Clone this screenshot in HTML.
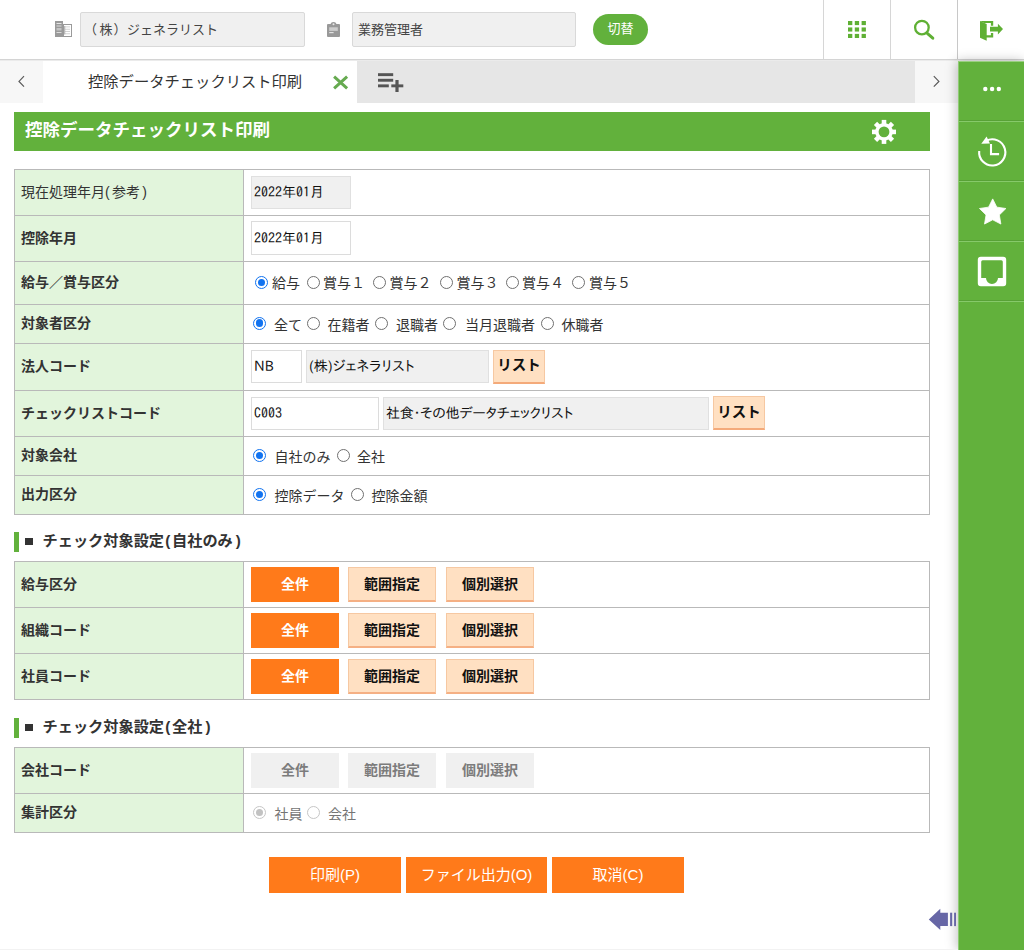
<!DOCTYPE html>
<html lang="ja">
<head>
<meta charset="utf-8">
<title>控除データチェックリスト印刷</title>
<style>
*{box-sizing:border-box;margin:0;padding:0}
html,body{width:1024px;height:950px;overflow:hidden;background:#fff}
body{font-family:"Liberation Sans","Noto Sans CJK JP",sans-serif;color:#333;font-size:14px;position:relative}
.abs{position:absolute}
/* header */
#hdr{left:0;top:0;width:1024px;height:60px;background:#fff;border-bottom:1px solid #d4d4d4;box-shadow:0 1px 1px rgba(0,0,0,.08)}
.hinput{position:absolute;top:12px;height:35px;background:#f0f0f0;border:1px solid #d9d9d9;border-radius:2px;font-size:13px;line-height:34px;color:#444;white-space:nowrap;overflow:hidden}
.vsep{position:absolute;top:0;width:1px;height:59px;background:#d6d6d6}
#kirikae{left:593px;top:14px;width:55px;height:31px;border-radius:16px;background:#62b13c;color:#fff;font-size:13px;line-height:30px;text-align:center}
/* tab bar */
#tabbar{left:0;top:61px;width:958px;height:42px;background:#e6e6e6}
#tabL{left:0;top:61px;width:43px;height:42px;background:#f7f7f7}
#tabR{left:915px;top:61px;width:43px;height:42px;background:#f7f7f7}
#tab{left:43px;top:61px;width:314px;height:42px;background:#fff;font-size:15.3px;line-height:41px;color:#333;white-space:nowrap}
/* sidebar */
#side{left:958px;top:61px;width:66px;height:889px;background:#62b13c;box-shadow:-1px 0 11px rgba(0,0,0,.26);border-top:1px solid #9ad080;border-left:1px solid #8fcb74}
.sline{position:absolute;left:959px;width:65px;height:1px;background:#86c96a;border-top:1px solid #58a236;box-sizing:content-box;margin-top:-1px}
/* title */
#title{left:14px;top:112px;width:916px;height:39px;background:#62b13c;color:#fff;font-weight:bold;font-size:17.5px;line-height:37px;padding-left:11px;white-space:nowrap}
table.f{position:absolute;left:14px;width:916px;border-collapse:collapse;table-layout:fixed}
table.f td{border:1px solid #b9b9b9;vertical-align:middle;white-space:nowrap;font-size:15px;color:#333}
table.f td.l{width:229px;background:#e2f5dc;padding-left:6px;padding-bottom:4px;font-weight:bold;font-size:14px;color:#333}
table.f td.l.n{font-weight:normal;color:#333}
table.f td.v{padding-left:7px}
.in{display:inline-block;vertical-align:middle;height:33px;border:1px solid #dcdcdc;background:#fff;font-family:"IPAGothic","Liberation Sans",sans-serif;font-size:14px;line-height:31px;padding-left:2px;color:#111;overflow:hidden}
.in.g{background:#f0f0f0;border-color:#e0e0e0}
.in.p{font-family:"IPAPGothic","IPAGothic","Liberation Sans",sans-serif}
.lb{display:inline-block;vertical-align:middle;height:34px;background:#ffe0c2;border:1px solid #f6c8a2;border-bottom:2px solid #f4aa7a;font-weight:bold;font-size:14.5px;line-height:29px;text-align:center;color:#111}
.rd{display:inline-block;vertical-align:middle;width:13px;height:13px;border-radius:50%;border:1px solid #767676;background:#fff;position:relative}
.rd.c{border-color:#1a73e8}
.rd.c::after{content:"";position:absolute;left:2px;top:2px;width:7px;height:7px;border-radius:50%;background:#1a73e8}
.rd.d{border-color:#c4c4c4}
.rd.d.c::after{background:#c0c0c0}
.rt{display:inline-block;vertical-align:middle;font-size:15px;color:#333}
.h2{position:absolute;left:14px;height:20px;border-left:5px solid #62b13c;padding-left:23.5px;font-weight:bold;font-size:15.2px;line-height:17px;color:#333;white-space:nowrap}
.h2::before{content:"";position:absolute;left:5.5px;top:5.5px;width:8px;height:7px;background:#333}
.pa{margin-left:1.2px;letter-spacing:1.8px}
.pb{margin-left:3px}
.pl{letter-spacing:2.3px}.pr{margin-left:2.3px}
.b{display:inline-block;vertical-align:middle;width:88px;height:35px;margin-right:9px;font-weight:bold;font-size:14px;line-height:32px;text-align:center}
.b.on{background:#ff7a1a;color:#fff;line-height:34px}
.b.of{background:#ffe0c2;border:1px solid #f6c8a2;border-bottom:2px solid #f5b084;color:#111}
.b.ds{background:#f0f0f0;color:#7c7c7c;line-height:34px}
.big{position:absolute;top:857px;height:36px;background:#ff7a1a;color:#fff;font-size:15px;line-height:35px;text-align:center;white-space:nowrap}

.r{position:absolute;width:13px;height:13px;border-radius:50%;border:1.25px solid #707070;background:#fff}
.r.c{border:1.8px solid #1273f0}
.r.c::after{content:"";position:absolute;left:50%;top:50%;width:7.4px;height:7.4px;margin:-3.7px 0 0 -3.7px;border-radius:50%;background:#1273f0}
.r.d{border-color:#c6c6c6}
.r.d.c{border:1px solid #c6c6c6}
.r.d.c::after{background:#c2c2c2}
.x{position:absolute;font-size:14px;line-height:20px;height:20px;color:#333;white-space:nowrap}
.x.d{color:#757575}
</style>
</head>
<body>
<!-- header -->
<div id="hdr" class="abs"></div>
<div class="hinput" style="left:80px;width:225px;padding-left:7px"><span style="position:relative;left:-4px">（</span><span style="position:relative;left:-1.5px">株</span><span style="position:relative;left:-0.5px">）</span>ジェネラリスト</div>
<div class="hinput" style="left:352px;width:224px;padding-left:5px">業務管理者</div>
<div id="kirikae" class="abs">切替</div>
<div class="vsep" style="left:823px"></div>
<div class="vsep" style="left:890px"></div>
<div class="vsep" style="left:957px;background:#c8c8c8"></div>

<!-- tab bar -->
<div id="tabbar" class="abs"></div>
<div id="tabL" class="abs"></div>
<div id="tabR" class="abs"></div>
<div id="tab" class="abs"><span style="position:absolute;left:45px">控除データチェックリスト印刷</span></div>

<!-- sidebar -->
<div id="side" class="abs"></div>
<div class="sline" style="top:121px"></div>
<div class="sline" style="top:181px"></div>
<div class="sline" style="top:241px"></div>
<div class="sline" style="top:301px"></div>

<div class="abs" style="left:0;top:949px;width:958px;height:1px;background:#f2f2f2"></div>
<!-- title -->
<div id="title" class="abs">控除データチェックリスト印刷</div>

<!-- table 1 -->
<table class="f" style="top:169px">
<tr style="height:46px"><td class="l n">現在処理年月<span class="pl">(</span>参考<span class="pr">)</span></td><td class="v"><span class="in g" style="width:100px">2022年01月</span></td></tr>
<tr style="height:46px"><td class="l">控除年月</td><td class="v" style="padding-bottom:1px"><span class="in" style="width:100px;height:34px;line-height:32px">2022年01月</span></td></tr>
<tr style="height:43px"><td class="l">給与／賞与区分</td><td class="v"></td></tr>
<tr style="height:39px"><td class="l">対象者区分</td><td class="v"></td></tr>
<tr style="height:47px"><td class="l">法人コード</td><td class="v" style="padding-bottom:2px"><span class="in p" style="width:51px">NB</span><span class="in g p" style="width:183px;margin-left:4px;letter-spacing:0.15px">(株)ジェネラリスト</span><span class="lb" style="width:52px;margin-left:4px;position:relative;top:1px">リスト</span></td></tr>
<tr style="height:46px"><td class="l">チェックリストコード</td><td class="v"><span class="in" style="width:128px">C003</span><span class="in g p" style="width:326px;margin-left:4px;letter-spacing:-0.22px">社食･その他データチェックリスト</span><span class="lb" style="width:52px;margin-left:4px;position:relative;top:-1px;line-height:31px">リスト</span></td></tr>
<tr style="height:39px"><td class="l">対象会社</td><td class="v"></td></tr>
<tr style="height:39px"><td class="l">出力区分</td><td class="v"></td></tr>
</table>

<div class="h2" style="top:532px">チェック対象設定<span class="pa">(</span>自社のみ<span class="pb">)</span></div>

<table class="f" style="top:561px">
<tr style="height:46px"><td class="l">給与区分</td><td class="v"><span class="b on">全件</span><span class="b of" style="margin-right:10px">範囲指定</span><span class="b of">個別選択</span></td></tr>
<tr style="height:46px"><td class="l">組織コード</td><td class="v"><span class="b on">全件</span><span class="b of" style="margin-right:10px">範囲指定</span><span class="b of">個別選択</span></td></tr>
<tr style="height:46px"><td class="l">社員コード</td><td class="v"><span class="b on">全件</span><span class="b of" style="margin-right:10px">範囲指定</span><span class="b of">個別選択</span></td></tr>
</table>

<div class="h2" style="top:718px">チェック対象設定<span class="pa">(</span>全社<span class="pb">)</span></div>

<table class="f" style="top:747px">
<tr style="height:46px"><td class="l">会社コード</td><td class="v"><span class="b ds">全件</span><span class="b ds" style="margin-right:10px">範囲指定</span><span class="b ds">個別選択</span></td></tr>
<tr style="height:39px"><td class="l">集計区分</td><td class="v"></td></tr>
</table>

<!-- radios -->
<span class="r c" style="left:254.8px;top:276.0px"></span>
<span class="x" style="left:272.0px;top:273px">給与</span>
<span class="r" style="left:306.5px;top:276.0px"></span>
<span class="x" style="left:323.0px;top:273px">賞与１</span>
<span class="r" style="left:372.5px;top:276.0px"></span>
<span class="x" style="left:389.5px;top:273px">賞与２</span>
<span class="r" style="left:439.8px;top:276.0px"></span>
<span class="x" style="left:456.5px;top:273px">賞与３</span>
<span class="r" style="left:506.0px;top:276.0px"></span>
<span class="x" style="left:522.0px;top:273px">賞与４</span>
<span class="r" style="left:572.2px;top:276.0px"></span>
<span class="x" style="left:589.0px;top:273px">賞与５</span>
<span class="r c" style="left:253.0px;top:316.5px"></span>
<span class="x" style="left:274.0px;top:315.0px">全て</span>
<span class="r" style="left:307.2px;top:316.5px"></span>
<span class="x" style="left:327.5px;top:315.0px">在籍者</span>
<span class="r" style="left:375.2px;top:316.5px"></span>
<span class="x" style="left:396.0px;top:315.0px">退職者</span>
<span class="r" style="left:443.0px;top:316.5px"></span>
<span class="x" style="left:465.0px;top:315.0px">当月退職者</span>
<span class="r" style="left:540.5px;top:316.5px"></span>
<span class="x" style="left:561.5px;top:315.0px">休職者</span>
<span class="r c" style="left:253.0px;top:449.0px"></span>
<span class="x" style="left:274.5px;top:446.5px">自社のみ</span>
<span class="r" style="left:336.5px;top:449.0px"></span>
<span class="x" style="left:357.0px;top:446.5px">全社</span>
<span class="r c" style="left:253.0px;top:488.2px"></span>
<span class="x" style="left:274.5px;top:485.5px">控除データ</span>
<span class="r" style="left:350.5px;top:488.2px"></span>
<span class="x" style="left:371.5px;top:485.5px">控除金額</span>
<span class="r c d" style="left:253.0px;top:806.0px"></span>
<span class="x d" style="left:274.5px;top:803.5px">社員</span>
<span class="r d" style="left:307.0px;top:806.0px"></span>
<span class="x d" style="left:328.0px;top:803.5px">会社</span>

<div class="big" style="left:269px;width:132px">印刷(P)</div>
<div class="big" style="left:406px;width:141px">ファイル出力(O)</div>
<div class="big" style="left:552px;width:132px">取消(C)</div>


<!-- icons -->
<svg class="abs" style="left:0;top:0" width="1024" height="950" viewBox="0 0 1024 950">
 <!-- building -->
 <g>
  <rect x="55" y="21" width="8" height="16" fill="#9a9a9a"/>
  <rect x="56.5" y="23" width="5" height="1" fill="#e6e6e6"/>
  <rect x="56.5" y="25.5" width="5" height="1" fill="#dcdcdc"/>
  <rect x="56.5" y="28" width="5" height="2.5" fill="#c4c4c4"/>
  <rect x="56.5" y="32" width="5" height="1" fill="#dcdcdc"/>
  <rect x="63.5" y="24.5" width="8" height="12" fill="#fff" stroke="#9a9a9a" stroke-width="1"/>
  <g fill="#c9c9c9"><rect x="65" y="26.5" width="5" height="0.8"/><rect x="65" y="28.8" width="5" height="0.8"/><rect x="65" y="31.1" width="5" height="0.8"/><rect x="65" y="33.4" width="5" height="0.8"/></g>
  <rect x="64.3" y="26" width="0.9" height="8.5" fill="#9f9f9f"/>
 </g>
 <!-- clipboard -->
 <g>
  <rect x="327" y="24" width="13" height="13" rx="1" fill="#999"/>
  <path d="M330.5 25 a3 3 0 0 1 6 0z" fill="#999"/>
  <circle cx="333.5" cy="24.3" r="1" fill="#e8e8e8"/>
  <rect x="329.2" y="27.3" width="8.6" height="3.6" fill="#cdcdcd"/>
  <rect x="329.2" y="32" width="4.4" height="1.2" fill="#e2e2e2"/>
 </g>
 <!-- grid -->
 <g fill="#5fb034">
  <rect x="848" y="21" width="4.3" height="4.1"/><rect x="854.8" y="21" width="4.3" height="4.1"/><rect x="861.6" y="21" width="4.3" height="4.1"/>
  <rect x="848" y="27.45" width="4.3" height="4.1"/><rect x="854.8" y="27.45" width="4.3" height="4.1"/><rect x="861.6" y="27.45" width="4.3" height="4.1"/>
  <rect x="848" y="33.9" width="4.3" height="4.1"/><rect x="854.8" y="33.9" width="4.3" height="4.1"/><rect x="861.6" y="33.9" width="4.3" height="4.1"/>
 </g>
 <!-- search -->
 <g fill="none" stroke="#5fb034">
  <circle cx="921.9" cy="27.6" r="6.8" stroke-width="2.3"/>
  <path d="M927.3 33.4 L932.8 38.2" stroke-width="3" stroke-linecap="round"/>
 </g>
 <!-- logout -->
 <g fill="#5fb034">
  <path d="M980 20.9 H993.2 V25.8 H990.9 V22.9 H984 Z"/>
  <path d="M990.9 32.9 H993.2 V37.5 H986 V35.3 H990.9 Z"/>
  <path d="M980 20.9 L986.7 24 V40.8 L980 37.8 Z"/>
  <path d="M990 26.8 H997.9 V23.7 L1003 29.1 L997.9 34.5 V31.4 H990 Z"/>
 </g>
 <!-- tab arrows -->
 <path d="M24 76.2 L19 81.4 L24 86.6" fill="none" stroke="#5a5a5a" stroke-width="1.2"/>
 <path d="M933.8 76.2 L938.9 81.4 L933.8 86.6" fill="none" stroke="#5a5a5a" stroke-width="1.2"/>
 <!-- tab close X -->
 <path d="M334.1 76.7 L347.1 88.3 M347.1 76.7 L334.1 88.3" stroke="#66aa50" stroke-width="3" fill="none"/>
 <!-- playlist add -->
 <g fill="#555">
  <rect x="378" y="73.2" width="15.2" height="2.9"/>
  <rect x="378" y="78.8" width="15.2" height="2.9"/>
  <rect x="378" y="84.4" width="10.8" height="2.9"/>
  <rect x="391.3" y="84.4" width="12" height="2.9"/>
  <rect x="395.4" y="80" width="3.2" height="12"/>
 </g>
 <!-- gear -->
 <g transform="translate(884 131.9)" fill="#fff">
  <g id="teeth">
   <rect x="-2.3" y="-12" width="4.6" height="24"/>
   <rect x="-2.3" y="-12" width="4.6" height="24" transform="rotate(45)"/>
   <rect x="-2.3" y="-12" width="4.6" height="24" transform="rotate(90)"/>
   <rect x="-2.3" y="-12" width="4.6" height="24" transform="rotate(135)"/>
  </g>
  <circle r="8.8"/>
  <circle r="5.4" fill="#62b13c"/>
 </g>
 <!-- sidebar dots -->
 <g fill="#fff"><circle cx="985.3" cy="89" r="2.2"/><circle cx="992.1" cy="89" r="2.2"/><circle cx="998.8" cy="89" r="2.2"/></g>
 <!-- history -->
 <g fill="none" stroke="#fff" stroke-width="2.1" transform="translate(-0.2 0.5)">
  <path d="M986.5 140.2 A13.1 13.1 0 1 1 979.4 150.5"/>
  <path d="M991.2 143.5 V153.6 H999.3"/>
 </g>
 <path d="M981.3 143.8 L989.9 143.6 L986.6 136.4 Z" fill="#fff"/>
 <!-- star -->
 <path d="M992.70 198.90 L996.81 207.14 L1005.92 208.50 L999.36 214.96 L1000.87 224.05 L992.70 219.80 L984.53 224.05 L986.04 214.96 L979.48 208.50 L988.59 207.14 Z" fill="#fff" stroke="#fff" stroke-width="0.8" stroke-linejoin="round"/>
 <!-- inbox -->
 <path fill-rule="evenodd" fill="#fff" d="M980.8 256.8 H1003.2 A3 3 0 0 1 1006.2 259.8 V283.2 A3 3 0 0 1 1003.2 286.2 H980.8 A3 3 0 0 1 977.8 283.2 V259.8 A3 3 0 0 1 980.8 256.8 Z M982.7 260.2 A1.5 1.5 0 0 0 981.2 261.7 V278 H986 A6 6 0 0 0 998 278 H1002.8 V261.7 A1.5 1.5 0 0 0 1001.3 260.2 Z"/>
 <!-- back arrow -->
 <g fill="#6767a6">
  <path d="M928.8 919.4 L940.3 908.8 V912.7 H947.9 V926.1 H940.3 V930.1 Z"/>
  <rect x="950.1" y="912.7" width="2.1" height="13.4"/>
  <rect x="954.1" y="912.7" width="1.9" height="13.4"/>
 </g>
</svg>
</body>
</html>
